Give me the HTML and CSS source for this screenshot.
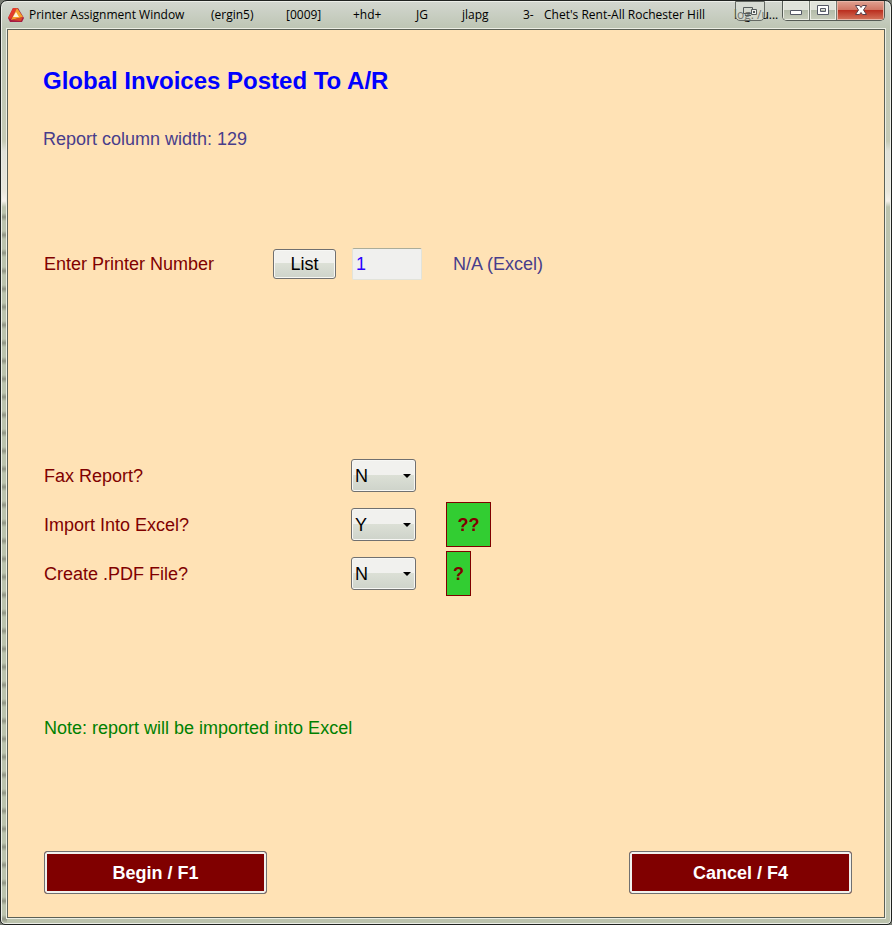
FILE: index.html
```html
<!DOCTYPE html>
<html lang="en">
<head>
<meta charset="utf-8">
<title>Printer Assignment Window</title>
<link rel="stylesheet" href="styles.css">
</head>
<body>
<div class="window">
  <header class="titlebar">
    <svg class="app-icon" viewBox="0 0 16 16" aria-hidden="true">
      <path d="M5 1h5l6 10-2 4H2l-2-4z" fill="#a51c43"/>
      <path d="M5 1h4L3 12l-3-1z" fill="#e43b2c"/>
      <path d="M9 1l6 9-12 3z" fill="#f5a32b"/>
      <path d="M3 13l12-3-2 4z" fill="#d94a28"/>
      <path d="M8 5l3 5H5z" fill="#fff3dc"/>
    </svg>
    <div class="captions">
      <span>Printer Assignment Window</span>
      <span>(ergin5)</span>
      <span>[0009]</span>
      <span>+hd+</span>
      <span>JG</span>
      <span>jlapg</span>
      <span>3-</span>
      <span>Chet's Rent-All Rochester Hill</span>
      <span>log: /u...</span>
    </div>
    <button class="dock" type="button" aria-label="Displays">
      <svg viewBox="0 0 16 11" aria-hidden="true">
        <path d="M1.500 1.500h9v6h-9zM3 9.500h6M6 7.500v2" fill="none" stroke="#555b5b"/>
        <path d="M9.500 3.500h5v5h-5z" fill="#eef0ed" stroke="#555b5b"/>
        <path d="M11 5h2v2h-2z" fill="#555b5b"/>
      </svg>
    </button>
    <div class="controls">
      <button class="control minimize" type="button" aria-label="Minimize">
        <svg viewBox="0 0 14 12" aria-hidden="true"><path d="M1.500 6.500h11v4h-11z" fill="#fff" stroke="#555966"/></svg>
      </button>
      <button class="control maximize" type="button" aria-label="Maximize">
        <svg viewBox="0 0 14 12" aria-hidden="true"><path d="M1.500 1.500h11v9h-11zM4.500 4.500h5v3h-5z" fill="#fff" fill-rule="evenodd" stroke="#555966"/></svg>
      </button>
      <button class="control close" type="button" aria-label="Close">
        <svg viewBox="0 0 14 12" aria-hidden="true"><path d="M1.500 1.500h4L7 3.500l1.500-2h4L9.500 6l3 4.500h-4L7 8.500l-1.500 2h-4l3-4.500z" fill="#fff" stroke="#58404a"/></svg>
      </button>
    </div>
  </header>

  <main class="panel">
    <h1>Global Invoices Posted To A/R</h1>
    <p class="info">Report column width: 129</p>

    <form class="form">
      <div class="printer">
        <label for="printer">Enter Printer Number</label>
        <button class="list" type="button">List</button>
        <input id="printer" type="text" value="1">
        <span class="info">N/A (Excel)</span>
      </div>

      <div class="options">
        <div class="option">
          <label for="fax">Fax Report?</label>
          <div class="select"><select id="fax"><option>N</option><option>Y</option></select></div>
        </div>
        <div class="option">
          <label for="excel">Import Into Excel?</label>
          <div class="select"><select id="excel"><option>Y</option><option>N</option></select></div>
          <button class="help wide" type="button">??</button>
        </div>
        <div class="option">
          <label for="pdf">Create .PDF File?</label>
          <div class="select"><select id="pdf"><option>N</option><option>Y</option></select></div>
          <button class="help" type="button">?</button>
        </div>
      </div>

      <p class="note">Note: report will be imported into Excel</p>

      <div class="actions">
        <button class="action" type="submit">Begin / F1</button>
        <button class="action" type="button">Cancel / F4</button>
      </div>
    </form>
  </main>
</div>
</body>
</html>
```
FILE: styles.css
```css
* {
  box-sizing: border-box;
}

body {
  margin: 0;
  background: #777b73;
  font-family: "Liberation Sans", sans-serif;
  font-size: 18px;
  line-height: 24px;
}

h1,
p {
  margin: 0;
}

button,
input,
select {
  margin: 0;
  padding: 0;
  font: inherit;
}

.window {
  position: relative;
  display: flex;
  flex-direction: column;
  min-height: 100vh;
  padding: 0 6px 6px;
  border: 1px solid #1f2220;
  border-radius: 7px 7px 5px 5px;
  background:
    repeating-linear-gradient(transparent 0 6px, rgb(100 100 90 / 50%) 10px, transparent 14px 18px) 0 206px / 6px 100% no-repeat,
    linear-gradient(#d3d7d0 0, #bdc5b3 28px, #c5cab5 130px, #c5cab5 140px, #e0e1d8 150px, #e8e6da 190px, #f5f1ea 200px, #bcc3ad 206px, #bcc3ad 100%);
  box-shadow: inset 0 0 0 1px #eceee8;
}

.titlebar {
  display: flex;
  align-items: center;
  height: 28px;
  padding-left: 1px;
  gap: 5px;
  overflow: hidden;
}

.app-icon {
  flex: none;
  width: 16px;
  height: 16px;
}

.captions {
  display: grid;
  flex: 1;
  grid-template-columns: 182px 75px 67px 63px 46px 61px 21px 190px 1fr;
  color: #000;
  font-family: "Open Sans", "Noto Sans", sans-serif;
  font-size: 12px;
  line-height: 16px;
  white-space: nowrap;
}

.dock {
  position: absolute;
  top: 0;
  right: 126px;
  width: 30px;
  height: 20px;
  border: 1px solid #646963;
  border-radius: 0 0 5px 5px;
  background: rgb(222 225 218 / 50%);
}

.dock svg {
  display: block;
  width: 16px;
  height: 11px;
  margin: 0 auto;
}

.controls {
  position: absolute;
  top: 0;
  right: 6px;
  display: flex;
  height: 20px;
  overflow: hidden;
  border: 1px solid #555b55;
  border-top: 0;
  border-radius: 0 0 5px 5px;
}

.control {
  width: 27px;
  padding-bottom: 2px;
  border: 0;
  border-right: 1px solid #747a72;
  background: linear-gradient(#e0e3db 0 45%, #b4bcaa 50%, #c9cebd);
  box-shadow: inset 0 0 0 1px #eceee6;
}

.control svg {
  display: block;
  width: 14px;
  height: 12px;
  margin: auto;
}

.close {
  width: 47px;
  border: 0;
  background: linear-gradient(#e0a292 0, #d17765 45%, #bb3020 50%, #d4755c);
  box-shadow: inset 0 0 0 1px #e8b5a7;
}

.panel {
  display: flex;
  flex: 1;
  flex-direction: column;
  padding: 33px 32px 23px 35px;
  border: 1px solid #5b6056;
  background: #ffe2b5;
  box-shadow: 0 0 0 1px #eceee4;
}

h1 {
  color: #0000ff;
  font-size: 24px;
  font-weight: bold;
  line-height: 36px;
}

.info {
  color: #483d8b;
}

h1 + .info {
  margin-top: 28px;
}

.form {
  display: flex;
  flex: 1;
  flex-direction: column;
  margin-top: 97px;
  padding-left: 1px;
  color: #800000;
}

.printer {
  display: flex;
  align-items: center;
}

.printer label {
  width: 229px;
}

.list {
  width: 63px;
  height: 30px;
  margin-right: 16px;
}

.list,
select {
  border: 1px solid #707070;
  border-radius: 3px;
  background: linear-gradient(#f1f1ee 0 48%, #dce0d6 48%, #ced3ca);
  box-shadow: inset 0 0 0 1px #f7f7f4;
  color: #000;
}

.printer input {
  width: 70px;
  height: 32px;
  margin-right: 31px;
  padding-left: 3px;
  border: 1px solid #e2e3da;
  border-top-color: #abad9a;
  border-radius: 2px;
  background: #f0f0ee;
  color: #2a00ff;
}

.options {
  display: grid;
  gap: 4px;
  margin-top: 173px;
}

.option {
  display: flex;
  align-items: center;
  height: 45px;
}

.option label {
  width: 307px;
}

.select {
  position: relative;
  width: 65px;
  margin-right: 30px;
}

.select::after {
  position: absolute;
  top: 15px;
  right: 5px;
  border: 4px solid transparent;
  border-top-color: #000;
  border-bottom: 0;
  content: "";
  pointer-events: none;
}

select {
  display: block;
  width: 100%;
  height: 33px;
  padding-left: 3px;
  appearance: none;
}

.help {
  width: 25px;
  height: 45px;
  border: 1px solid #800000;
  background: #32cd32;
  color: #800000;
  font-weight: bold;
}

.help.wide {
  width: 45px;
}

.note {
  margin-top: 120px;
  color: #008000;
}

.actions {
  display: flex;
  justify-content: space-between;
  margin-top: auto;
}

.action {
  width: 223px;
  height: 43px;
  border: 1px solid #707070;
  border-radius: 3px;
  background: #800000;
  box-shadow: inset 0 0 0 2px #f1f1ed;
  color: #fff;
  font-weight: bold;
}
```
